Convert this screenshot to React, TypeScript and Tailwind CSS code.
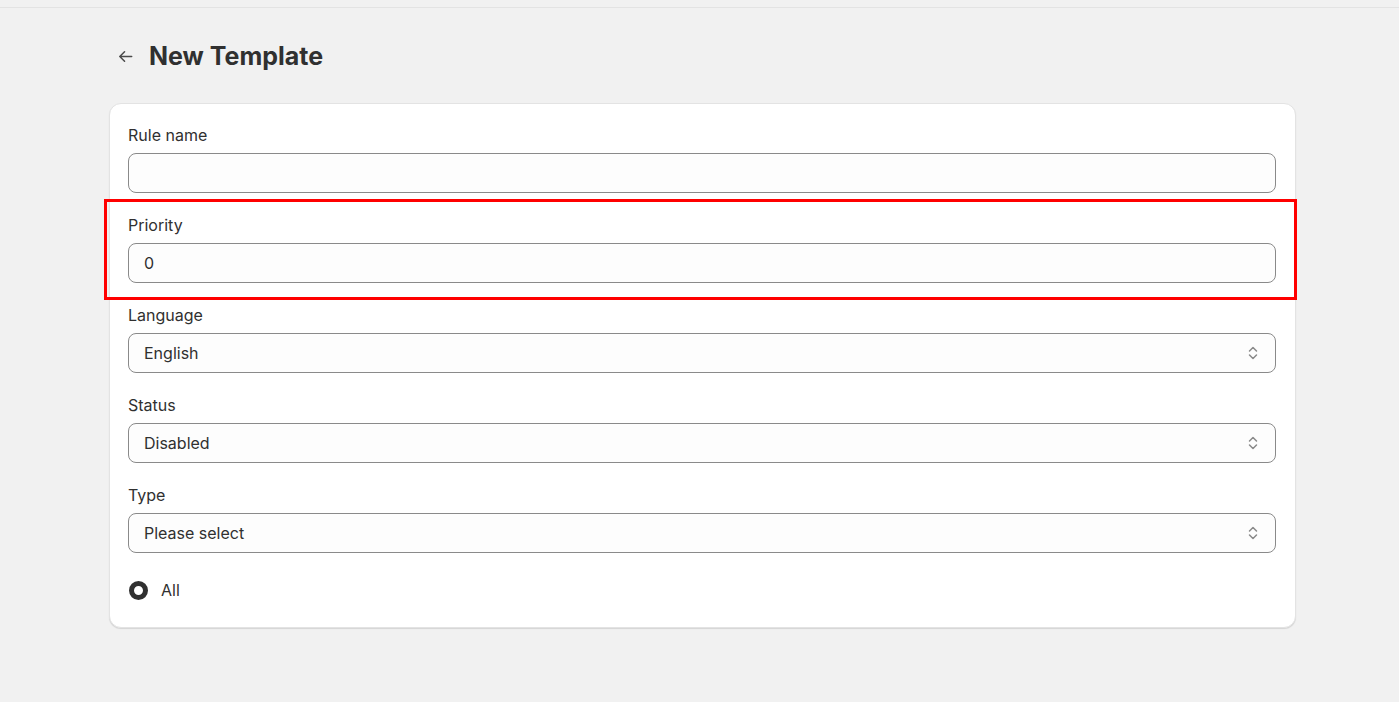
import React from 'react';

const Chevrons: React.FC = () => (
  <svg width="12" height="18" viewBox="0 0 12 18" fill="none" className="text-[#8a8a8a]">
    <path d="M2.5 7 6 3.5 9.5 7" stroke="currentColor" strokeWidth="1.5" strokeLinecap="round" strokeLinejoin="round" />
    <path d="M2.5 11 6 14.5 9.5 11" stroke="currentColor" strokeWidth="1.5" strokeLinecap="round" strokeLinejoin="round" />
  </svg>
);

const Field: React.FC<{ label: string; children: React.ReactNode; highlighted?: boolean }> = ({ label, children, highlighted }) => (
  <div className="relative flex flex-col gap-[9px]">
    {highlighted && (
      <div className="absolute -left-[24px] -right-[21px] -top-[17px] -bottom-[17px] border-[3px] border-[#ff0000] pointer-events-none" />
    )}
    <label className="text-[16px] leading-[18px] text-[#303030]">{label}</label>
    {children}
  </div>
);

const TextInput: React.FC<{ value?: string }> = ({ value = '' }) => (
  <input
    readOnly
    value={value}
    className="h-10 w-full rounded-lg border border-[#8a8a8a] bg-[#fdfdfd] px-[15px] text-[16px] text-[#303030] outline-none"
  />
);

const Select: React.FC<{ value: string }> = ({ value }) => (
  <div className="flex h-10 w-full items-center justify-between rounded-lg border border-[#8a8a8a] bg-[#fdfdfd] pl-[15px] pr-[16px] text-[16px] text-[#303030]">
    <span>{value}</span>
    <Chevrons />
  </div>
);

export default function App() {
  return (
    <div className="min-h-screen bg-[#f1f1f1] font-['Inter',sans-serif]">
      <div className="h-[8px] border-b border-[#e3e3e3]" />
      <div className="ml-[109px] w-[1187px] pt-[28px]">
        <div className="flex items-center gap-[14px] pl-[7px]">
          <svg width="19" height="19" viewBox="0 0 20 20" fill="none" className="text-[#4a4a4a]">
            <path d="M16.5 10H4M9 5l-5 5 5 5" stroke="currentColor" strokeWidth="1.6" strokeLinecap="round" strokeLinejoin="round" />
          </svg>
          <h1 className="text-[25px] font-bold leading-[40px] text-[#303030]">New Template</h1>
        </div>
        <div className="mt-[27px] flex flex-col gap-[23px] rounded-xl border border-[#e3e3e3] bg-white pl-[18px] pr-[19px] pt-[22px] pb-[25px] shadow-[0_1px_1px_rgba(0,0,0,0.12)]">
          <Field label="Rule name">
            <TextInput />
          </Field>
          <Field label="Priority" highlighted>
            <TextInput value="0" />
          </Field>
          <Field label="Language">
            <Select value="English" />
          </Field>
          <Field label="Status">
            <Select value="Disabled" />
          </Field>
          <Field label="Type">
            <Select value="Please select" />
          </Field>
          <label className="mt-[2px] flex items-center gap-[13px] text-[16px] text-[#303030]">
            <span className="ml-[1px] h-[19px] w-[19px] rounded-full border-[5px] border-[#303030] bg-white" />
            All
          </label>
        </div>
      </div>
    </div>
  );
}
